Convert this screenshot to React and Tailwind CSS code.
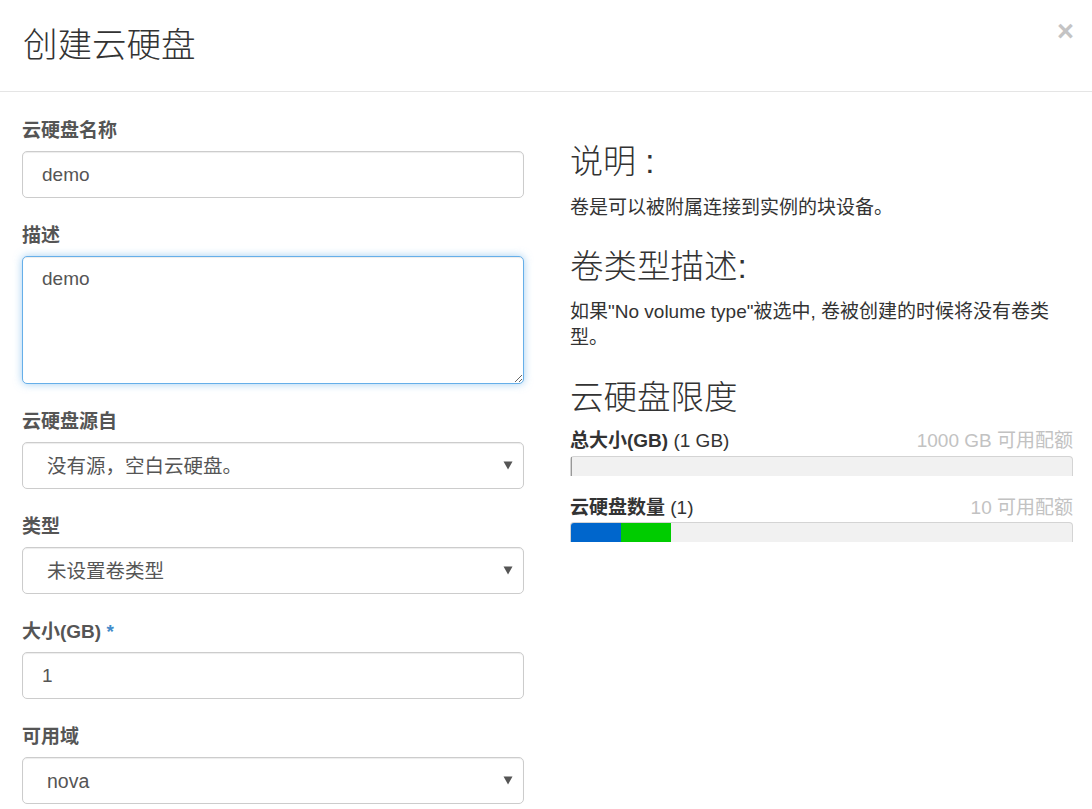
import React from "react";

const FONT = { fontFamily: '"Liberation Sans", "Noto Sans CJK SC", sans-serif' };

function Label({ children }) {
  return (
    <div className="h-[27px] leading-[27px] mb-[7px] text-[19px] font-bold text-[#555]">
      {children}
    </div>
  );
}

function Caret() {
  return (
    <svg width="10" height="9" viewBox="0 0 10 9" className="shrink-0">
      <path d="M0.5 0.5 L9.5 0.5 L5 8.5 Z" fill="#555" />
    </svg>
  );
}

function TextInput({ value }) {
  return (
    <div className="h-[47px] w-full rounded-[5px] border border-[#ccc] bg-white flex items-center pt-[2px] pl-[19px] text-[19px] text-[#555] shadow-[inset_0_1px_1px_rgba(0,0,0,0.075)]">
      {value}
    </div>
  );
}

function SelectBox({ value }) {
  return (
    <div className="h-[47px] w-full rounded-[5px] border border-[#ccc] bg-white flex items-center justify-between pl-[24px] pr-[10px] text-[19.5px] text-[#555] shadow-[inset_0_1px_1px_rgba(0,0,0,0.075)]">
      <span className="pt-[2px]">{value}</span>
      <Caret />
    </div>
  );
}

function Group({ label, children }) {
  return (
    <div className="mb-[24px]">
      <Label>{label}</Label>
      {children}
    </div>
  );
}

export default function App() {
  return (
    <div style={FONT} className="w-[1092px] h-[809px] bg-white overflow-hidden text-[#333]">
      {/* Header */}
      <div className="h-[92px] border-b border-[#e5e5e5] flex justify-between pl-[23px] pr-[23px]">
        <h3 className="mt-[26px] text-[34.5px] leading-[38px] font-light text-[#333]">
          创建云硬盘
        </h3>
        <div className="mt-[15px] mr-[-5px] text-[29px] leading-[32px] font-bold text-[#c4c4c4]">
          ×
        </div>
      </div>

      {/* Body */}
      <div className="flex px-[22px] pt-[25px] gap-[46px]">
        {/* Left column */}
        <div className="w-[502px] shrink-0">
          <Group label="云硬盘名称">
            <TextInput value="demo" />
          </Group>
          <Group label="描述">
            <textarea
              readOnly
              defaultValue="demo"
              className="block h-[128px] w-full rounded-[5px] border border-[#66afe9] bg-white pl-[19px] pt-[8px] text-[19px] leading-[27px] text-[#555] outline-none shadow-[inset_0_1px_1px_rgba(0,0,0,0.075),0_0_8px_rgba(102,175,233,0.6)]"
              style={FONT}
            />
          </Group>
          <Group label="云硬盘源自">
            <SelectBox value="没有源，空白云硬盘。" />
          </Group>
          <Group label="类型">
            <SelectBox value="未设置卷类型" />
          </Group>
          <Group
            label={
              <span>
                大小(GB) <span className="text-[#428bca]">*</span>
              </span>
            }
          >
            <TextInput value="1" />
          </Group>
          <Group label="可用域">
            <SelectBox value="nova" />
          </Group>
        </div>

        {/* Right column */}
        <div className="w-[503px] shrink-0 pt-[25px]">
          <h3 className="h-[40px] leading-[40px] text-[33px] font-light text-[#333]">说明 :</h3>
          <p className="mt-[13px] text-[19px] leading-[26px] text-[#333]">
            卷是可以被附属连接到实例的块设备。
          </p>
          <h3 className="mt-[26px] h-[40px] leading-[40px] text-[33.5px] font-light text-[#333]">
            卷类型描述:
          </h3>
          <p className="mt-[12px] text-[19px] leading-[26px] text-[#333]">
            如果"No volume type"被选中, 卷被创建的时候将没有卷类型。
          </p>
          <h3 className="mt-[27px] h-[40px] leading-[40px] text-[33.5px] font-light text-[#333]">
            云硬盘限度
          </h3>

          <div className="mt-[10px] flex justify-between h-[26px] leading-[26px] text-[19px]">
            <span className="text-[#333]">
              <b>总大小(GB)</b> (1 GB)
            </span>
            <span className="text-[#c2c2c2]">1000 GB 可用配额</span>
          </div>
          <div className="mt-[2px] h-[20px] rounded-t-[4px] border-t border-x border-[#d4d4d4] bg-[#f1f1f1] flex">
            <div className="w-[1px] bg-[#999]" />
          </div>

          <div className="mt-[19px] flex justify-between h-[26px] leading-[26px] text-[19px]">
            <span className="text-[#333]">
              <b>云硬盘数量</b> (1)
            </span>
            <span className="text-[#c2c2c2]">10 可用配额</span>
          </div>
          <div className="mt-[1px] h-[20px] rounded-t-[4px] border-t border-x border-[#d4d4d4] bg-[#f1f1f1] flex overflow-hidden">
            <div className="w-[50px] bg-[#0066cc]" />
            <div className="w-[50px] bg-[#00cc00]" />
          </div>
        </div>
      </div>
    </div>
  );
}
